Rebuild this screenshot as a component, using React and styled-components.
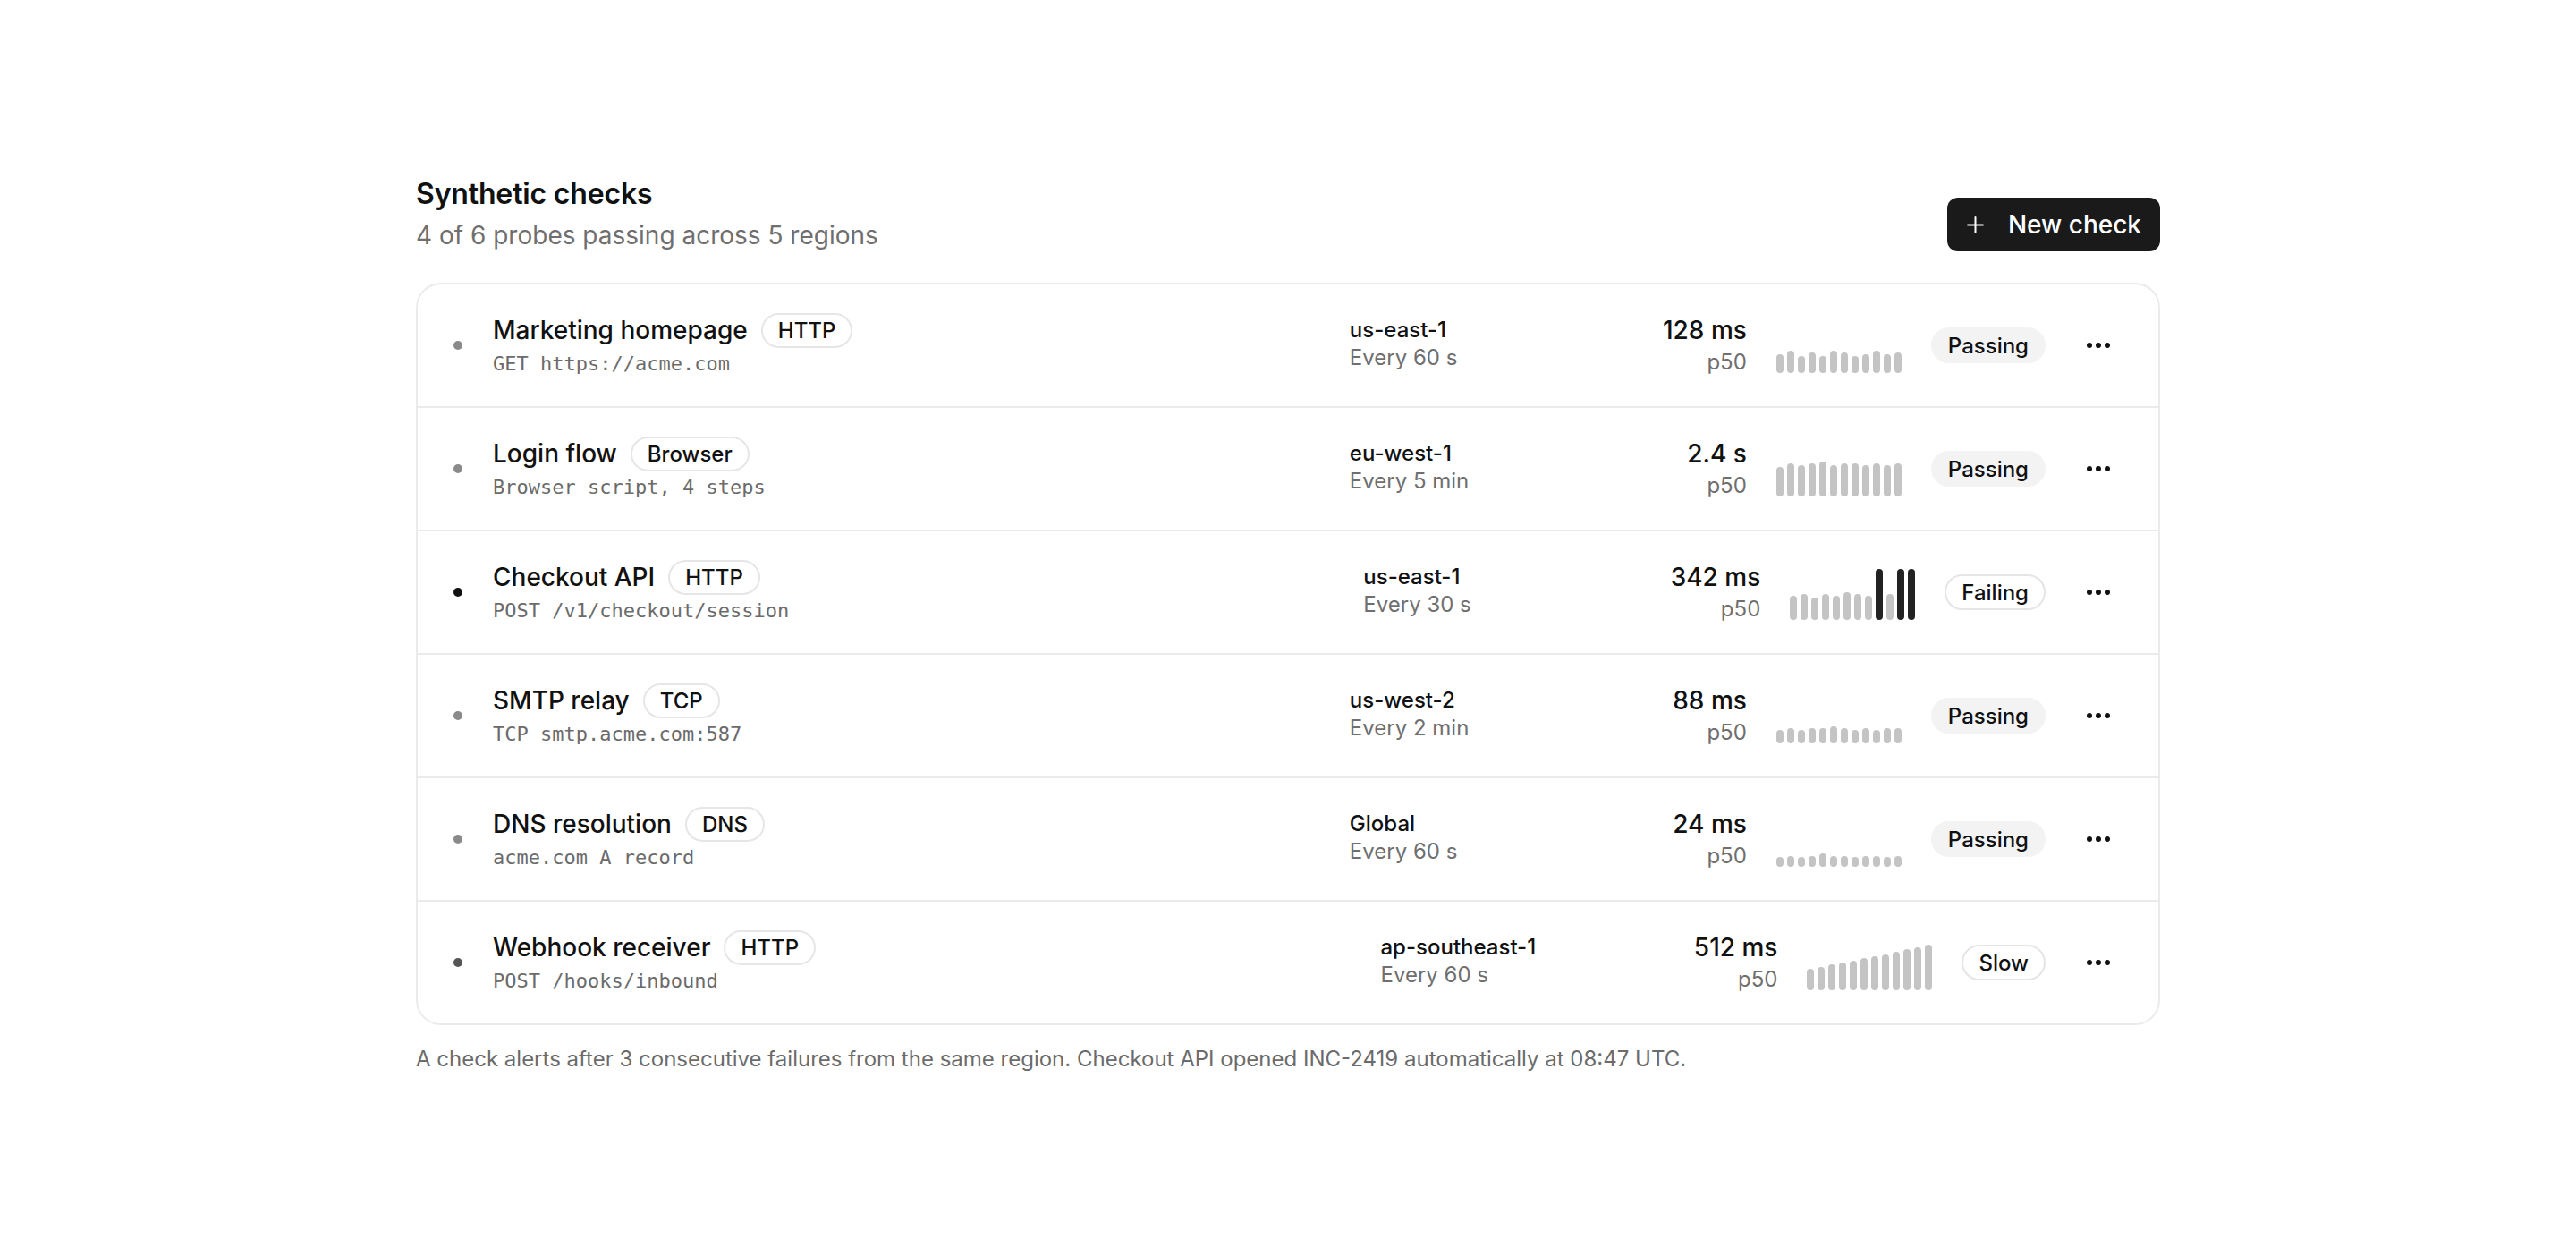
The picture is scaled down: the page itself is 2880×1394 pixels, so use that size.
import React from "react";
import styled, { createGlobalStyle } from "styled-components";

const Global = createGlobalStyle`
  html, body { margin: 0; padding: 0; background: #ffffff; }
  body { font-family: Inter, "Noto Sans", "Liberation Sans", sans-serif; color: #111111; }
  * { box-sizing: border-box; }
`;

const Page = styled.main`
  width: 1950px;
  margin: 0 auto;
  padding-top: 198px;
  padding-bottom: 120px;
`;

const Header = styled.header`
  display: flex;
  justify-content: space-between;
  align-items: flex-end;
`;

const TitleBlock = styled.div`
  display: flex;
  flex-direction: column;
`;

const Title = styled.h1`
  margin: 0;
  font-size: 32px;
  line-height: 1.2;
  font-weight: 600;
  color: #111111;
  letter-spacing: -0.005em;
`;

const Subtitle = styled.p`
  margin: 10px 0 0;
  font-size: 28px;
  line-height: 35px;
  color: #6f6f6f;
`;

const PrimaryButton = styled.button`
  display: flex;
  align-items: center;
  gap: 27px;
  height: 60px;
  padding: 0 21px 0 22px;
  border: none;
  border-radius: 12px;
  background: #1a1a1a;
  color: #ffffff;
  font-family: inherit;
  font-size: 28px;
  font-weight: 500;
  cursor: pointer;
`;

const Card = styled.section`
  margin-top: 35px;
  border: 2px solid #ebebeb;
  border-radius: 28px;
  overflow: hidden;
  background: #ffffff;
`;

const Row = styled.div`
  box-sizing: content-box;
  display: flex;
  align-items: center;
  min-height: 136px;
  padding: 0 40px;
  & + & { border-top: 2px solid #ebebeb; }
`;

const StatusDot = styled.span`
  width: 10px;
  height: 10px;
  border-radius: 50%;
  flex: none;
  background: ${(p) => p.$color};
  margin-right: 34px;
`;

const NameBlock = styled.div`
  flex: 1;
  min-width: 0;
  display: flex;
  flex-direction: column;
`;

const NameLine = styled.div`
  display: flex;
  align-items: center;
  gap: 15px;
  height: 40px;
`;

const Name = styled.span`
  font-size: 28px;
  line-height: 1.2;
  font-weight: 500;
  color: #111111;
  white-space: nowrap;
`;

const Tag = styled.span`
  display: inline-flex;
  align-items: center;
  height: 39px;
  padding: 0 17px;
  border: 2px solid #e6e6e6;
  border-radius: 999px;
  font-size: 24px;
  font-weight: 500;
  color: #111111;
`;

const Target = styled.code`
  margin-top: 2px;
  font-family: "DejaVu Sans Mono", "Liberation Mono", monospace;
  font-size: 22px;
  line-height: 1.4;
  color: #6b6b6b;
`;

const RegionCol = styled.div`
  width: 216px;
  flex: none;
  display: flex;
  flex-direction: column;
  margin-top: -4px;
`;

const Region = styled.span`
  font-size: 24px;
  line-height: 31px;
  font-weight: 500;
  color: #111111;
`;

const Interval = styled.span`
  font-size: 24px;
  line-height: 31px;
  color: #6f6f6f;
`;

const LatencyCol = styled.div`
  width: 196px;
  flex: none;
  margin-left: 32px;
  display: flex;
  flex-direction: column;
  align-items: flex-end;
`;

const Latency = styled.span`
  font-size: 28px;
  line-height: 1.2;
  font-weight: 500;
  color: #111111;
`;

const Percentile = styled.span`
  margin-top: 5px;
  font-size: 24px;
  line-height: 1.2;
  color: #6f6f6f;
`;

const Spark = styled.div`
  flex: none;
  margin-left: 33px;
  width: 140px;
  height: 62px;
  display: flex;
  align-items: flex-end;
  gap: 4px;
`;

const Bar = styled.span`
  width: 8px;
  border-radius: 4px;
  background: ${(p) => (p.$alert ? "#222222" : "#c4c4c4")};
`;

const Badge = styled.span`
  flex: none;
  margin-left: 33px;
  display: inline-flex;
  align-items: center;
  height: 40px;
  padding: 0 17px;
  border-radius: 999px;
  border: 2px solid ${(p) => (p.$tone === "ok" ? "#f3f3f3" : "#e5e5e5")};
  background: ${(p) => (p.$tone === "ok" ? "#f3f3f3" : "#ffffff")};
  font-size: 24px;
  font-weight: 500;
  color: #111111;
  white-space: nowrap;
`;

const MenuButton = styled.button`
  flex: none;
  margin-left: 32px;
  width: 54px;
  height: 40px;
  border: none;
  background: transparent;
  display: flex;
  align-items: center;
  justify-content: center;
  padding: 0;
  cursor: pointer;
`;

const Footnote = styled.p`
  margin: 20px 0 0;
  font-size: 24px;
  line-height: 1.5;
  color: #6b6b6b;
`;

const PlusIcon = () => (
  <svg width="19" height="19" viewBox="0 0 19 19" fill="none" aria-hidden="true">
    <path d="M9.5 1v17M1 9.5h17" stroke="#ffffff" strokeWidth="2" strokeLinecap="round" />
  </svg>
);

const DotsIcon = () => (
  <svg width="26" height="6" viewBox="0 0 26 6" aria-hidden="true">
    <circle cx="3" cy="3" r="3" fill="#111111" />
    <circle cx="13" cy="3" r="3" fill="#111111" />
    <circle cx="23" cy="3" r="3" fill="#111111" />
  </svg>
);

const checks = [
  {
    name: "Marketing homepage",
    kind: "HTTP",
    target: "GET https://acme.com",
    region: "us-east-1",
    interval: "Every 60 s",
    latency: "128 ms",
    status: "Passing",
    tone: "ok",
    dot: "#8a8a8a",
    bars: [21, 25, 19, 23, 19, 25, 23, 19, 21, 25, 21, 23],
  },
  {
    name: "Login flow",
    kind: "Browser",
    target: "Browser script, 4 steps",
    region: "eu-west-1",
    interval: "Every 5 min",
    latency: "2.4 s",
    status: "Passing",
    tone: "ok",
    dot: "#8a8a8a",
    bars: [33, 37, 35, 37, 39, 35, 37, 37, 35, 37, 35, 37],
  },
  {
    name: "Checkout API",
    kind: "HTTP",
    target: "POST /v1/checkout/session",
    region: "us-east-1",
    interval: "Every 30 s",
    latency: "342 ms",
    status: "Failing",
    tone: "bad",
    dot: "#111111",
    bars: [27, 29, 25, 29, 27, 31, 29, 27, 57, 29, 57, 57],
    alerts: [8, 10, 11],
  },
  {
    name: "SMTP relay",
    kind: "TCP",
    target: "TCP smtp.acme.com:587",
    region: "us-west-2",
    interval: "Every 2 min",
    latency: "88 ms",
    status: "Passing",
    tone: "ok",
    dot: "#8a8a8a",
    bars: [15, 17, 15, 17, 17, 19, 17, 15, 17, 15, 17, 17],
  },
  {
    name: "DNS resolution",
    kind: "DNS",
    target: "acme.com A record",
    region: "Global",
    interval: "Every 60 s",
    latency: "24 ms",
    status: "Passing",
    tone: "ok",
    dot: "#8a8a8a",
    bars: [11, 12, 11, 12, 15, 12, 12, 11, 12, 12, 11, 12],
  },
  {
    name: "Webhook receiver",
    kind: "HTTP",
    target: "POST /hooks/inbound",
    region: "ap-southeast-1",
    interval: "Every 60 s",
    latency: "512 ms",
    status: "Slow",
    tone: "warn",
    dot: "#555555",
    bars: [24, 26, 29, 31, 33, 36, 38, 40, 43, 46, 48, 51],
  },
];

export default function App() {
  return (
    <>
      <Global />
      <Page>
        <Header>
          <TitleBlock>
            <Title>Synthetic checks</Title>
            <Subtitle>4 of 6 probes passing across 5 regions</Subtitle>
          </TitleBlock>
          <PrimaryButton>
            <PlusIcon />
            New check
          </PrimaryButton>
        </Header>
        <Card>
          {checks.map((c) => (
            <Row key={c.name}>
              <StatusDot $color={c.dot} />
              <NameBlock>
                <NameLine>
                  <Name>{c.name}</Name>
                  <Tag>{c.kind}</Tag>
                </NameLine>
                <Target>{c.target}</Target>
              </NameBlock>
              <RegionCol>
                <Region>{c.region}</Region>
                <Interval>{c.interval}</Interval>
              </RegionCol>
              <LatencyCol>
                <Latency>{c.latency}</Latency>
                <Percentile>p50</Percentile>
              </LatencyCol>
              <Spark>
                {c.bars.map((h, i) => (
                  <Bar
                    key={i}
                    $alert={c.alerts ? c.alerts.includes(i) : false}
                    style={{ height: `${h}px` }}
                  />
                ))}
              </Spark>
              <Badge $tone={c.tone}>{c.status}</Badge>
              <MenuButton aria-label={`More actions for ${c.name}`}>
                <DotsIcon />
              </MenuButton>
            </Row>
          ))}
        </Card>
        <Footnote>
          A check alerts after 3 consecutive failures from the same region. Checkout API opened INC-2419
          automatically at 08:47 UTC.
        </Footnote>
      </Page>
    </>
  );
}
